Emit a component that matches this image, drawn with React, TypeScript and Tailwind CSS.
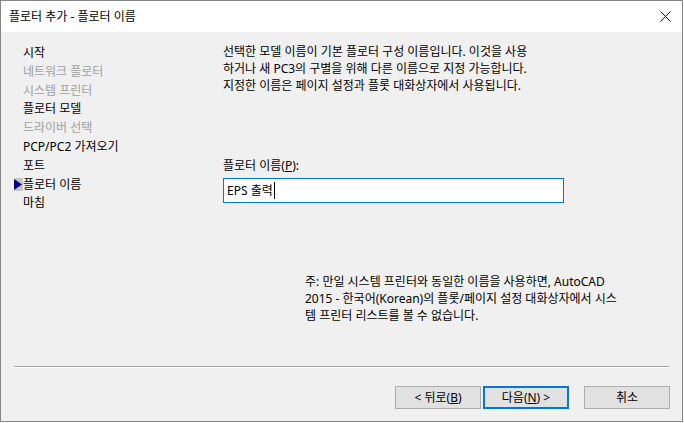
const FONT = { fontFamily: '"Noto Sans", "Noto Sans CJK KR", sans-serif' };

const steps = [
  { label: '시작', on: true },
  { label: '네트워크 플로터', on: false },
  { label: '시스템 프린터', on: false },
  { label: '플로터 모델', on: true },
  { label: '드라이버 선택', on: false },
  { label: 'PCP/PC2 가져오기', on: true },
  { label: '포트', on: true },
  { label: '플로터 이름', on: true, current: true },
  { label: '마침', on: true },
];

const StepList = () => (
  <ul className="flex flex-col pt-[12px] pl-[22px] w-[200px]">
    {steps.map((s) => (
      <li
        key={s.label}
        className={`relative h-[18.8px] leading-[18.8px] text-[12px] whitespace-nowrap ${
          s.on ? 'text-black' : 'text-[#a0a0a0]'
        }`}
      >
        {s.current && (
          <span className="absolute left-[-9px] top-[2px] w-[9px] h-[13px] bg-[#c4c4c4] flex items-center">
            <svg width="8" height="11" viewBox="0 0 8 11">
              <path d="M0 0 L8 5.5 L0 11 Z" fill="#000080" />
            </svg>
          </span>
        )}
        {s.label}
      </li>
    ))}
  </ul>
);

const Btn = ({
  children,
  primary,
  className = '',
}: {
  children: React.ReactNode;
  primary?: boolean;
  className?: string;
}) => (
  <button
    className={`h-[23px] w-[86px] bg-[#e1e1e1] text-[12px] text-black flex items-center justify-center ${
      primary ? 'border-2 border-[#0078d7]' : 'border border-[#adadad]'
    } ${className}`}
  >
    {children}
  </button>
);

export default function App() {
  return (
    <div
      style={FONT}
      className="w-[683px] h-[422px] border border-[#858585] bg-[#f0f0f0] flex flex-col text-black overflow-hidden"
    >
      <div className="h-[31px] bg-white flex items-center justify-between pl-[8px] pr-[11px] shrink-0">
        <span className="text-[12px]">플로터 추가 - 플로터 이름</span>
        <svg width="11" height="11" viewBox="0 0 11 11">
          <path d="M0.5 0.5 L10.5 10.5 M10.5 0.5 L0.5 10.5" stroke="#111" strokeWidth="1" />
        </svg>
      </div>

      <div className="flex h-[334px] shrink-0">
        <StepList />
        <div className="flex flex-col pt-[10.5px] pl-[22px] text-[12px]">
          <p className="leading-[17px] whitespace-nowrap">
            선택한 모델 이름이 기본 플로터 구성 이름입니다. 이것을 사용
            <br />
            하거나 새 PC3의 구별을 위해 다른 이름으로 지정 가능합니다.
            <br />
            지정한 이름은 페이지 설정과 플롯 대화상자에서 사용됩니다.
          </p>
          <label className="mt-[64px] leading-[15px]">
            플로터 이름(<span className="underline">P</span>):
          </label>
          <div className="mt-[5.5px] w-[341px] h-[25px] border border-[#0078d7] bg-white flex items-center pl-[3px] text-[12px]">
            <span>EPS 출력</span>
            <span className="inline-block w-px h-[17px] bg-black ml-[1px]" />
          </div>
          <p className="mt-[69.5px] ml-[82px] leading-[17px] whitespace-nowrap">
            주: 만일 시스템 프린터와 동일한 이름을 사용하면, AutoCAD
            <br />
            2015 - 한국어(Korean)의 플롯/페이지 설정 대화상자에서 시스
            <br />
            템 프린터 리스트를 볼 수 없습니다.
          </p>
        </div>
      </div>

      <div className="mx-[13px] border-t border-[#a0a0a0] border-b border-b-white" />

      <div className="flex justify-end pr-[12px] mt-[18px]">
        <Btn>
          &lt; 뒤로(<span className="underline">B</span>)
        </Btn>
        <Btn primary className="ml-[2px]">
          다음(<span className="underline">N</span>) &gt;
        </Btn>
        <Btn className="ml-[15px] w-[85px]">취소</Btn>
      </div>
    </div>
  );
}
